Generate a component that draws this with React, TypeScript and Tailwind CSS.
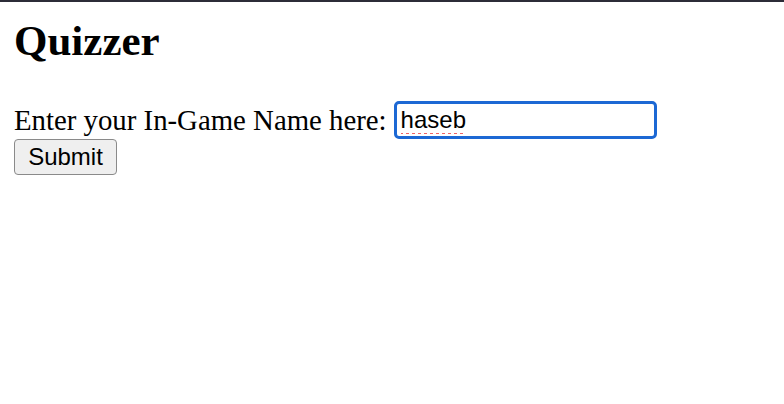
import React, { useState } from "react";

const App: React.FC = () => {
  const [name, setName] = useState("haseb");

  return (
    <div className="min-h-screen bg-white border-t-2 border-[#2c2c38] px-[14px] font-['Liberation_Serif',serif] text-black">
      {/* Title */}
      <h1 className="mt-[17px] text-[43px] leading-none font-bold">Quizzer</h1>

      {/* Name form */}
      <div className="mt-[39px] flex items-center h-[38px]">
        <span className="text-[28.8px] leading-none">Enter your In-Game Name here:</span>
        <input
          type="text"
          value={name}
          onChange={(e) => setName(e.target.value)}
          className="ml-[7px] h-[38px] w-[263px] px-[4px] border-[3px] border-[#1c68d4] rounded-[5px] outline-none font-['Liberation_Sans',sans-serif] text-[24px] underline decoration-dotted decoration-[#f06464] decoration-[3px] underline-offset-[5px]"
        />
      </div>
      <button className="h-[36px] w-[103px] border border-[#8a8a8a] rounded-[4px] bg-[#efefef] font-['Liberation_Sans',sans-serif] text-[24px] leading-none">
        Submit
      </button>
    </div>
  );
};

export default App;
